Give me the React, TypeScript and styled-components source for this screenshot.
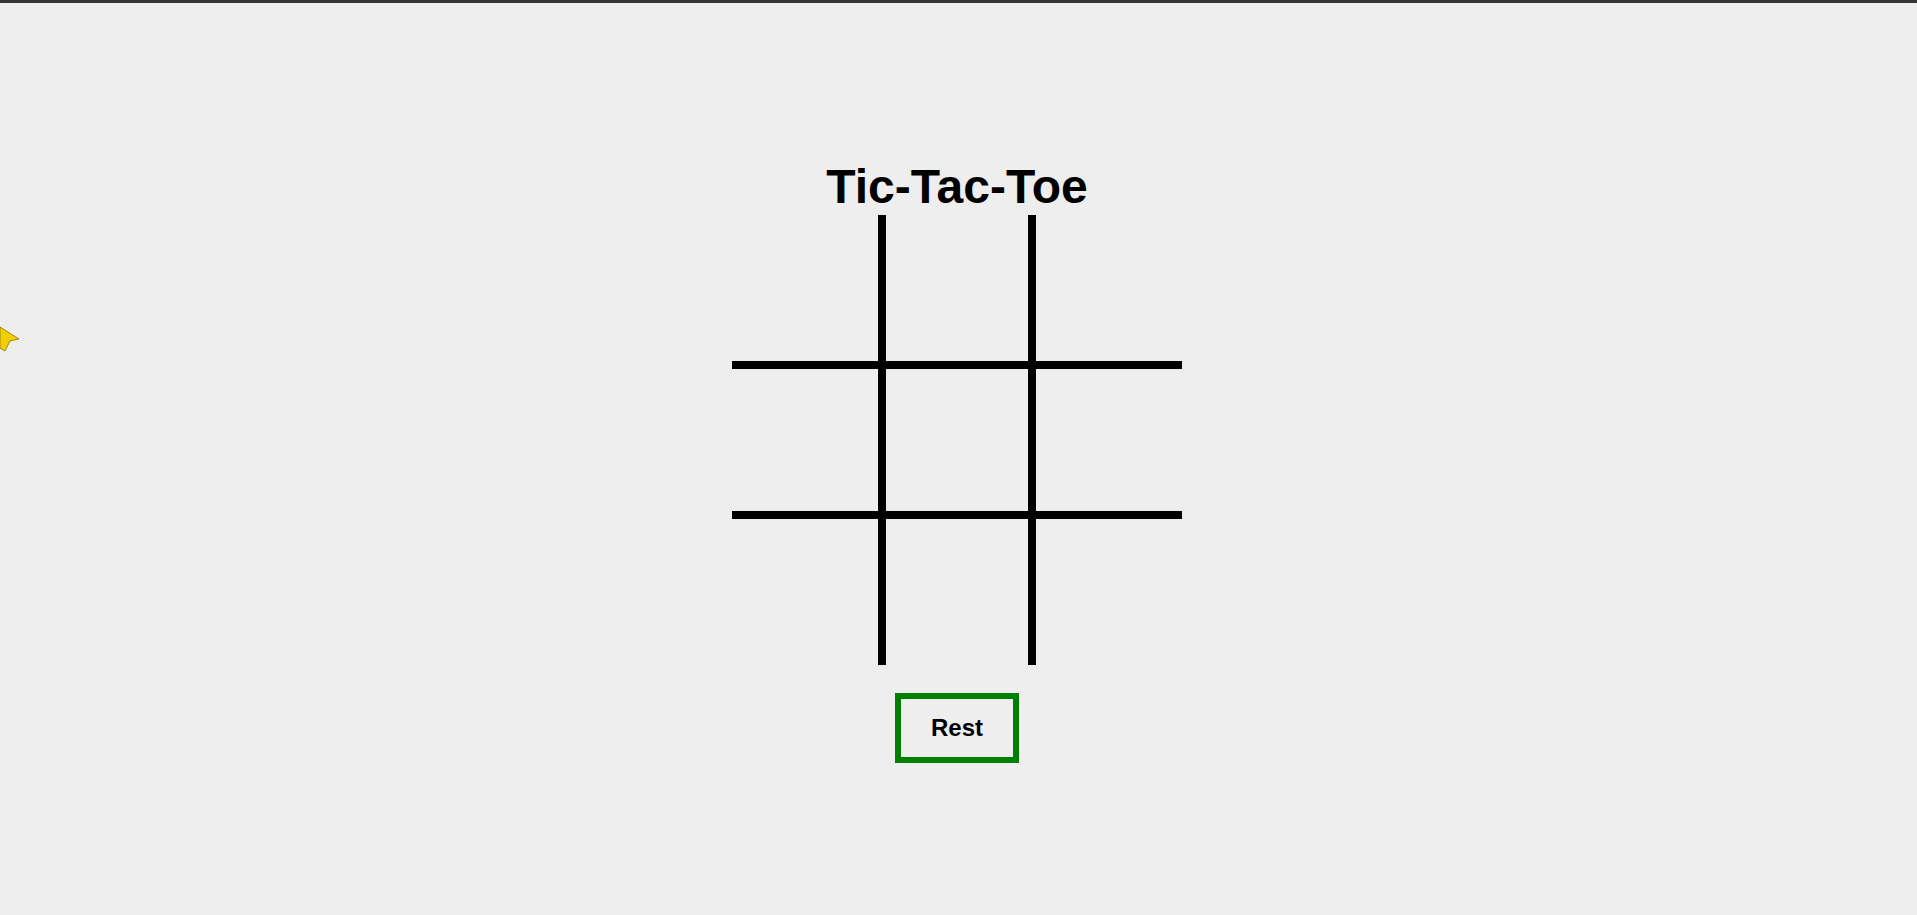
import React, { useState } from "react";
import styled, { createGlobalStyle } from "styled-components";

const GlobalStyle = createGlobalStyle`
  html, body {
    margin: 0;
    padding: 0;
    background: #eeeeee;
    font-family: "Liberation Sans", Arial, sans-serif;
    overflow: hidden;
  }
`;

const TopBar = styled.div`
  height: 3px;
  background: #353535;
`;

const Page = styled.main`
  position: relative;
  display: flex;
  flex-direction: column;
  align-items: center;
  padding-top: 160px;
  padding-right: 3px;
  height: 912px;
  box-sizing: border-box;
`;

const Title = styled.h1`
  margin: 0 0 4px;
  font-size: 48px;
  line-height: 1;
  font-weight: 700;
  color: #000;
`;

const Board = styled.div`
  display: grid;
  grid-template-columns: repeat(3, 150px);
  grid-template-rows: repeat(3, 150px);
`;

const Cell = styled.div<{ $col: number; $row: number }>`
  box-sizing: border-box;
  display: flex;
  align-items: center;
  justify-content: center;
  font-size: 80px;
  font-weight: 700;
  cursor: pointer;
  border-left: ${(p) => (p.$col > 0 ? "4px solid #000" : "none")};
  border-right: ${(p) => (p.$col < 2 ? "4px solid #000" : "none")};
  border-top: ${(p) => (p.$row > 0 ? "4px solid #000" : "none")};
  border-bottom: ${(p) => (p.$row < 2 ? "4px solid #000" : "none")};
`;

const ResetButton = styled.button`
  margin-top: 28px;
  box-sizing: border-box;
  width: 124px;
  height: 70px;
  border: 6px solid #008000;
  background: transparent;
  font-family: "Liberation Sans", Arial, sans-serif;
  font-size: 24px;
  font-weight: 700;
  color: #000;
  cursor: pointer;
  padding: 0;
`;

const Pointer = styled.svg`
  position: absolute;
  left: 0;
  top: 320px;
`;

export default function App() {
  const [cells, setCells] = useState<string[]>(Array(9).fill(""));
  const [turn, setTurn] = useState("X");

  const play = (i: number) => {
    if (cells[i]) return;
    const next = cells.slice();
    next[i] = turn;
    setCells(next);
    setTurn(turn === "X" ? "O" : "X");
  };

  return (
    <>
      <GlobalStyle />
      <TopBar />
      <Page>
        <Pointer width="22" height="32" viewBox="0 0 22 32">
          <polygon
            points="0,4 19,16 10,18 5,28 0,25"
            fill="#f2cf00"
            stroke="#8a7400"
            strokeWidth="0.8"
          />
        </Pointer>
        <Title>Tic-Tac-Toe</Title>
        <Board>
          {cells.map((v, i) => (
            <Cell key={i} $col={i % 3} $row={Math.floor(i / 3)} onClick={() => play(i)}>
              {v}
            </Cell>
          ))}
        </Board>
        <ResetButton
          onClick={() => {
            setCells(Array(9).fill(""));
            setTurn("X");
          }}
        >
          Rest
        </ResetButton>
      </Page>
    </>
  );
}
